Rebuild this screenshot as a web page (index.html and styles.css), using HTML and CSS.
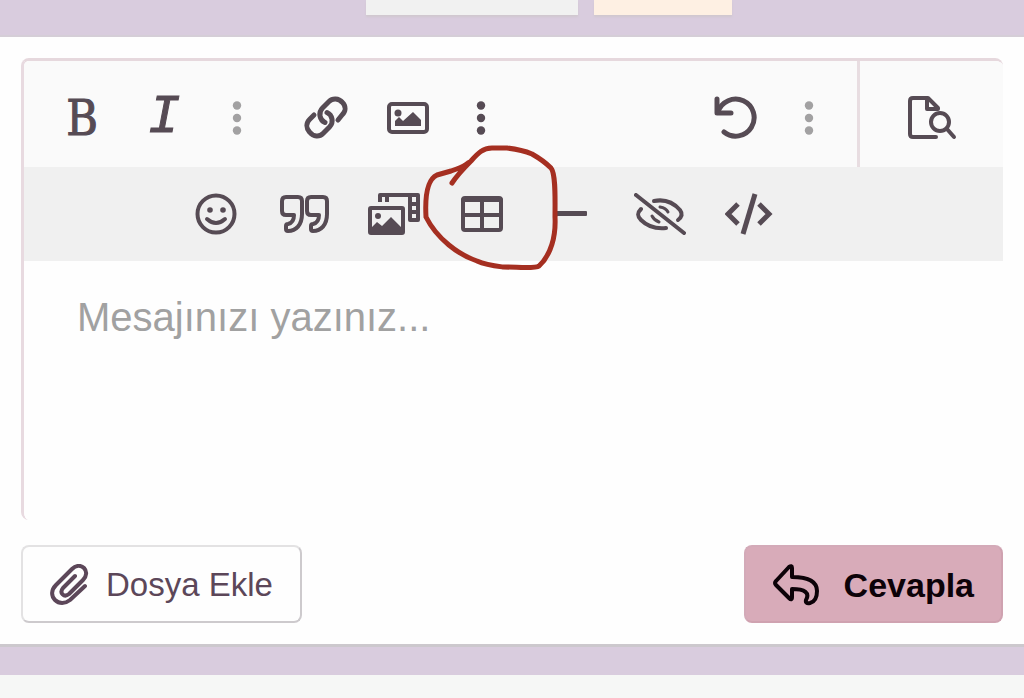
FILE: index.html
```html
<!DOCTYPE html>
<html lang="tr">
<head>
    <meta charset="UTF-8">
    <meta name="viewport" content="width=device-width, initial-scale=1.0">
    <title>Cevap Yaz</title>
    <link rel="stylesheet" href="styles.css">
</head>
<body>
    <div class="topbar">
        <div class="tab tab-gray"></div>
        <div class="tab tab-cream"></div>
    </div>

    <form class="reply">
        <div class="editor">
            <div class="toolbar">
                <div class="tools">
                    <button type="button" class="tool letter" aria-label="Kalın">B</button>
                    <button type="button" class="tool letter italic" aria-label="İtalik">I</button>
                    <button type="button" class="tool more muted" aria-label="Diğer biçimler">
                        <svg width="10" height="34" viewBox="0 0 10 34"><circle cx="5" cy="4.500" r="4.200"/><circle cx="5" cy="17" r="4.200"/><circle cx="5" cy="29.500" r="4.200"/></svg>
                    </button>
                </div>
                <div class="tools">
                    <button type="button" class="tool" aria-label="Bağlantı ekle">
                        <svg width="44" height="44" viewBox="0 0 44 44" class="line bold">
                            <path d="M10 19 L5.500 23.500 C2 27 2 32 5.500 36 C9.500 41 15.500 41 19 37.500 L25.500 31 C30 26.500 28.500 19 23 16.500"/>
                            <path d="M34 24 L38 19 C42 15 42 10 38.500 6.500 C34.500 2 28.500 2 25 5.500 L18.500 12 C14 16.500 15.500 24 21 26.500"/>
                        </svg>
                    </button>
                    <button type="button" class="tool" aria-label="Resim ekle">
                        <svg width="42" height="34" viewBox="0 0 42 34">
                            <rect x="2" y="3" width="38" height="28" rx="3" class="line"/>
                            <circle cx="11" cy="12" r="3.500"/>
                            <path d="M8 25 V20 L12 16 L16 20 L26 11 L34 19 V25 Z"/>
                        </svg>
                    </button>
                    <button type="button" class="tool more" aria-label="Diğer ekler">
                        <svg width="10" height="34" viewBox="0 0 10 34"><circle cx="5" cy="4.500" r="4.200"/><circle cx="5" cy="17" r="4.200"/><circle cx="5" cy="29.500" r="4.200"/></svg>
                    </button>
                </div>
                <div class="tools tools-right">
                    <button type="button" class="tool" aria-label="Geri al">
                        <svg width="44" height="44" viewBox="0 0 44 44" class="line bold">
                            <path d="M3 3 V17 H17"/>
                            <path d="M4 16 A18.500 18.500 0 1 1 10 36"/>
                        </svg>
                    </button>
                    <button type="button" class="tool more muted" aria-label="Diğer seçenekler">
                        <svg width="10" height="34" viewBox="0 0 10 34"><circle cx="5" cy="4.500" r="4.200"/><circle cx="5" cy="17" r="4.200"/><circle cx="5" cy="29.500" r="4.200"/></svg>
                    </button>
                </div>
                <button type="button" class="tool preview" aria-label="Önizleme">
                    <svg width="50" height="44" viewBox="0 0 50 44" class="line">
                        <path d="M29 41 H6 C4 41 3 40 3 38 V5 C3 3 4 2 6 2 H21 L31 12 V13 H20 V2"/>
                        <circle cx="33" cy="26" r="9"/>
                        <path d="M40 33 L47 41"/>
                    </svg>
                </button>
            </div>

            <div class="toolbar-extra">
                <button type="button" class="tool" aria-label="İfadeler">
                    <svg width="42" height="42" viewBox="0 0 42 42">
                        <circle cx="21" cy="21" r="18.500" class="line"/>
                        <circle cx="15" cy="17" r="2.800"/>
                        <circle cx="28" cy="17" r="2.800"/>
                        <path d="M12 26 Q21 34 30 26" class="line"/>
                    </svg>
                </button>
                <button type="button" class="tool" aria-label="Alıntı">
                    <svg width="50" height="40" viewBox="0 0 50 40" class="line">
                        <path d="M6 3 H18 Q22 3 22 7 V20 C22 31 16 37 8 37 Q6 37 6 35 V32 Q6 30 8 30 C12 29 14 26 14 21 H6 Q2 21 2 17 V7 Q2 3 6 3 Z"/>
                        <path d="M31 3 H43 Q47 3 47 7 V20 C47 31 41 37 33 37 Q31 37 31 35 V32 Q31 30 33 30 C37 29 39 26 39 21 H31 Q27 21 27 17 V7 Q27 3 31 3 Z"/>
                    </svg>
                </button>
                <button type="button" class="tool" aria-label="Galeri">
                    <svg width="52" height="42" viewBox="0 0 52 42">
                        <path d="M10 9 V2 Q10 0 12 0 H50 Q52 0 52 2 V27 Q52 29 50 29 H42 Q40 29 40 27 V4 H21 V9 H17 V4 H14 V9 Z"/>
                        <path d="M44 4 H48 V9 H44 Z M44 13 H48 V17 H44 Z M44 21 H48 V25 H44 Z" class="hole"/>
                        <rect x="2" y="15" width="33" height="25" rx="1" class="line"/>
                        <circle cx="10" cy="23" r="3"/>
                        <path d="M2 40 V36 L9 29 L14 33 L23 24 L35 36 V40 Z"/>
                    </svg>
                </button>
                <div class="tool marked">
                    <button type="button" class="tool" aria-label="Tablo ekle">
                        <svg width="42" height="38" viewBox="0 0 42 38">
                            <rect x="2" y="3" width="38" height="32" rx="2" class="line"/>
                            <path d="M2 5 H40 M21 4 V34 M3 20 H39" class="line"/>
                        </svg>
                    </button>
                    <svg class="scribble" width="140" height="130" viewBox="0 0 140 130">
                        <path d="M32 41 C38 32 45 25 51 19 C58 11 63 6 72 6 H87 C96 7 105 9 112 12 C119 16 126 21 131 26 C136 32 135 58 135 75 C136 94 131 113 119 124 C115 127 98 125 83 125 C75 124 66 123 57 119 C39 113 17 97 6 75 C5 57 6 38 17 33 L31 29 C39 26 44 25 48 21"/>
                    </svg>
                </div>
                <button type="button" class="tool" aria-label="Yatay çizgi">
                    <svg width="32" height="6" viewBox="0 0 32 6"><rect width="32" height="5" rx="1"/></svg>
                </button>
                <button type="button" class="tool" aria-label="Gizli metin">
                    <svg width="52" height="42" viewBox="0 0 52 42" class="line">
                        <path d="M2 2 L50 40"/>
                        <path d="M7 16 C3 20 3 23 7 27 C13 33 22 36 32 35"/>
                        <path d="M20 8 C30 6 39 9 46 17 C49 21 48 24 44 27"/>
                        <path d="M18 23 Q20 27 25 29 M26 14 Q32 15 34 19" class="thin"/>
                    </svg>
                </button>
                <button type="button" class="tool" aria-label="Kod">
                    <svg width="48" height="42" viewBox="0 0 48 42" class="line code">
                        <path d="M13 11 L3 21 L13 31"/>
                        <path d="M34 11 L44 21 L34 31"/>
                        <path d="M30 1 L18 41"/>
                    </svg>
                </button>
            </div>

            <textarea class="message" placeholder="Mesajınızı yazınız..." aria-label="Mesaj"></textarea>
        </div>

        <div class="actions">
            <button type="button" class="btn">
                <svg width="40" height="42" viewBox="0 0 40 42" class="line">
                    <path d="M25 12 L13 24 C9 29 14 34 19 30 L33 16 C37 12 37 7 34 4 C31 1 26 1 22 5 L6 21 C1 26 1 32 5 36 C9 40 15 40 20 36 L35 22"/>
                </svg>
                Dosya Ekle
            </button>
            <button type="submit" class="btn btn-primary">
                <svg width="46" height="42" viewBox="0 0 46 42" class="line">
                    <path d="M3 17 L16 3 Q19 1 19 4 V13 C34 13 44 17 44 27 C44 34 41 38 37 39 Q32 40 33 36 C37 29 32 25 19 25 V33 Q19 37 16 34 L3 21 Q1 19 3 17 Z"/>
                </svg>
                Cevapla
            </button>
        </div>
    </form>

    <div class="bottombar"></div>
</body>
</html>
```
FILE: styles.css
```css
* {
    box-sizing: border-box;
}
body {
    margin: 0;
    background: #f6f7f6;
    font-family: "Liberation Sans", Arial, sans-serif;
    color: #564b54;
}
.topbar {
    display: flex;
    justify-content: center;
    align-items: flex-start;
    gap: 16px;
    height: 37px;
    padding-left: 74px;
    background: #d9ccde;
    border-bottom: 2px solid #d5ced7;
}
.tab {
    height: 15px;
    box-shadow: 0 2px 2px #d0c8cf;
}
.tab-gray {
    width: 212px;
    background: #f1f1f1;
}
.tab-cream {
    width: 138px;
    background: #fef0e3;
}
.reply {
    padding: 21px;
    background: #fefefe;
}
.editor {
    border-top: 3px solid #e6d8dd;
    border-left: 3px solid #e8dae0;
    border-radius: 8px;
    overflow: hidden;
}
.toolbar {
    display: flex;
    height: 106px;
    padding-left: 17px;
    background: #fafafa;
}
.toolbar .tool {
    padding-top: 7px;
}
.tools {
    display: flex;
    margin-right: 16px;
}
.tools-right {
    margin-left: auto;
}
.tool {
    display: flex;
    align-items: center;
    justify-content: center;
    width: 82px;
    padding: 0;
    border: none;
    background: none;
    color: inherit;
    fill: currentColor;
    cursor: pointer;
}
.letter {
    font-family: "DejaVu Serif Condensed", "DejaVu Serif", serif;
    font-size: 48px;
    -webkit-text-stroke: 1px currentColor;
}
.italic {
    font-family: "Liberation Mono", monospace;
    font-size: 54px;
    font-style: italic;
}
.more {
    width: 64px;
}
.muted {
    color: #a2a1a2;
}
.preview {
    width: 146px;
    border-left: 3px solid #e8dde1;
}
.line {
    fill: none;
    stroke: currentColor;
    stroke-width: 4;
    stroke-linecap: round;
    stroke-linejoin: round;
}
.bold {
    stroke-width: 5;
}
.thin {
    stroke-width: 3;
}
.code {
    stroke-width: 5;
    stroke-linecap: butt;
    stroke-linejoin: miter;
}
.hole {
    fill: #f0f0f0;
}
.toolbar-extra {
    display: grid;
    grid-template-columns: repeat(7, 1fr);
    height: 94px;
    padding: 0 210px 0 148px;
    background: #f0f0f0;
}
.toolbar-extra .tool {
    width: 100%;
    height: 94px;
}
.marked {
    position: relative;
}
.scribble {
    position: absolute;
    top: -25px;
    left: 50%;
    margin-left: -62px;
    fill: none;
    stroke: #a52f21;
    stroke-width: 5;
    stroke-linecap: round;
    stroke-linejoin: round;
    pointer-events: none;
}
.message {
    display: block;
    width: 100%;
    height: 259px;
    padding: 32px 53px;
    border: none;
    outline: none;
    resize: none;
    background: #fefefe;
    font-family: inherit;
    font-size: 40px;
    line-height: 48px;
    color: #564b54;
}
.message::placeholder {
    color: #a1a1a1;
    opacity: 1;
}
.actions {
    display: flex;
    justify-content: space-between;
    margin-top: 25px;
}
.btn {
    display: flex;
    align-items: center;
    gap: 16px;
    height: 78px;
    padding: 2px 27px 0;
    border: 2px solid;
    border-color: #e3e2e3 #cdcacd #cdcacd #e3e2e3;
    border-radius: 8px;
    background: #fefefe;
    font-family: inherit;
    font-size: 33px;
    color: #5c4759;
    cursor: pointer;
}
.btn-primary {
    gap: 25px;
    border-color: #d3aab8 #cfa2b0 #cfa2b0 #d3aab8;
    background: #d8abb9;
    font-size: 34px;
    font-weight: bold;
    color: #0c0208;
}
.bottombar {
    height: 31px;
    background: #d9ccde;
    border-top: 3px solid #ccc8cd;
}
```
